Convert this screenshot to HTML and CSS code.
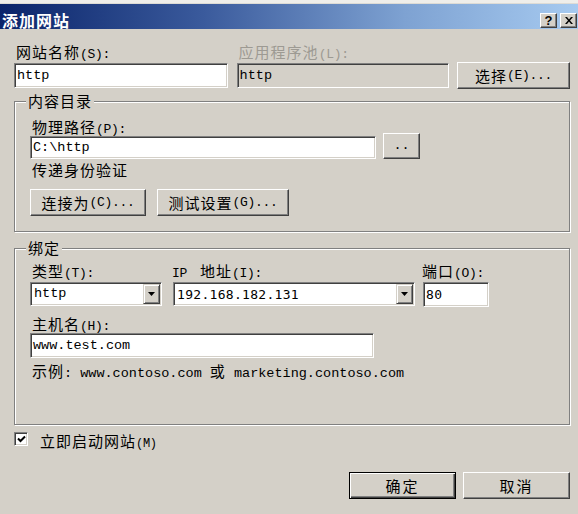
FILE: index.html
```html
<!DOCTYPE html>
<html lang="zh-CN">
<head>
<meta charset="utf-8">
<title>添加网站</title>
<link rel="stylesheet" href="styles.css">
</head>
<body>
<div class="window">
  <div class="topstrip"></div>
  <div class="titlebar">
    <span class="title">添加网站</span>
    <div class="tb-btns">
      <span class="tb-btn help">?</span>
      <span class="tb-btn close"><svg width="8" height="7" viewBox="0 0 8 7"><path d="M0 0h2l2 2.5L6 0h2L5 3.5 8 7H6L4 4.5 2 7H0l3-3.5z" fill="#000"/></svg></span>
    </div>
  </div>
  <div class="content">
    <div class="row1">
      <div class="field site">
        <span class="lbl">网站名称<span class="lat">(S):</span></span>
        <div class="input"><span class="mono">http</span></div>
      </div>
      <div class="field pool">
        <span class="lbl disabled">应用程序池<span class="lat">(L):</span></span>
        <div class="input dis"><span class="mono">http</span></div>
      </div>
      <div class="btn btn-select">选择<span class="lat">(E)...</span></div>
    </div>

    <fieldset class="group g1">
      <legend>内容目录</legend>
      <div class="gbody g1body">
        <span class="lbl">物理路径<span class="lat">(P):</span></span>
        <div class="path-row">
          <div class="input path"><span class="mono">C:\http</span></div>
          <div class="btn btn-dots"><span class="mono">..</span></div>
        </div>
        <span class="lbl auth">传递身份验证</span>
        <div class="btn-row">
          <div class="btn btn-conn">连接为<span class="lat">(C)...</span></div>
          <div class="btn btn-test">测试设置<span class="lat">(G)...</span></div>
        </div>
      </div>
    </fieldset>

    <fieldset class="group g2">
      <legend>绑定</legend>
      <div class="gbody g2body">
        <div class="bind-row">
          <div class="field col-type">
            <span class="lbl">类型<span class="lat">(T):</span></span>
            <div class="combo type"><span class="mono ctext">http</span><span class="arrow"><svg width="7" height="4" viewBox="0 0 7 4"><path d="M0 0h7L3.5 4z" fill="#000"/></svg></span></div>
          </div>
          <div class="field col-ip">
            <span class="lbl nopad"><span class="lat ip-lat">IP</span>地址<span class="lat">(I):</span></span>
            <div class="combo ip"><span class="sans-mono ctext">192.168.182.131</span><span class="arrow"><svg width="7" height="4" viewBox="0 0 7 4"><path d="M0 0h7L3.5 4z" fill="#000"/></svg></span></div>
          </div>
          <div class="field col-port">
            <span class="lbl nopad">端口<span class="lat">(O):</span></span>
            <div class="input port"><span class="sans-mono">80</span></div>
          </div>
        </div>
        <span class="lbl host-lbl">主机名<span class="lat">(H):</span></span>
        <div class="input host"><span class="mono">www.test.com</span></div>
        <p class="example">示例<span class="mono">: www.contoso.com </span>或<span class="mono"> marketing.contoso.com</span></p>
      </div>
    </fieldset>

    <div class="check-row">
      <span class="checkbox"><svg width="9" height="8" viewBox="0 0 9 8"><path d="M1 3.5l2.5 2.5L8 1.5" fill="none" stroke="#000" stroke-width="2"/></svg></span>
      <span class="check-lbl">立即启动网站<span class="lat small">(M)</span></span>
    </div>

    <div class="footer">
      <div class="btn btn-ok default">确定</div>
      <div class="btn btn-cancel">取消</div>
    </div>
  </div>
</div>
</body>
</html>
```

FILE: styles.css
```css
html, body {
  margin: 0;
  padding: 0;
}

body {
  width: 578px;
  height: 514px;
  overflow: hidden;
  background: #d4d0c8;
  color: #000;
  font-family: "Noto Sans CJK SC", "Noto Sans", sans-serif;
  font-size: 15px;
  letter-spacing: 1px;
}

.window {
  width: 578px;
  height: 514px;
  background: #d4d0c8;
}

.topstrip {
  height: 3px;
  background: #efeeea;
  border-bottom: 1px solid #dddbd5;
}

.titlebar {
  height: 25px;
  box-sizing: border-box;
  padding: 7px 1px 0 2px;
  display: flex;
  justify-content: space-between;
  align-items: flex-start;
  background: linear-gradient(to right, #0a246a 0%, #3a5a9c 35%, #7ea2d2 70%, #a6caf0 100%);
}

.title {
  color: #fff;
  font-weight: bold;
  font-size: 16px;
  line-height: 18px;
  height: 18px;
  letter-spacing: 1px;
}

.tb-btns {
  display: flex;
  gap: 3px;
  margin-top: 2px;
}

.tb-btn {
  width: 17px;
  height: 15px;
  box-sizing: border-box;
  background: #d4d0c8;
  border: 1px solid;
  border-color: #fff #404040 #404040 #fff;
  box-shadow: inset -1px -1px #808080;
  display: flex;
  align-items: center;
  justify-content: center;
}

.help {
  font-family: "Liberation Sans", sans-serif;
  font-weight: bold;
  font-size: 13px;
  line-height: 12px;
  letter-spacing: 0;
}

.content {
  padding: 14px 8px 0 14px;
}

.lbl {
  display: block;
  height: 18px;
  line-height: 18px;
  padding-left: 2px;
  white-space: nowrap;
}

.lbl.nopad {
  padding-left: 0;
}

.lat {
  font-family: "Liberation Mono", monospace;
  font-size: 13px;
  line-height: 1;
  letter-spacing: -0.3px;
}

.lat.ip-lat {
  margin-right: 13px;
}

.lat.small {
  font-size: 12px;
}

.disabled {
  color: #9d9a93;
}

.mono {
  font-family: "Liberation Mono", monospace;
  font-size: 13.5px;
  line-height: 1;
  letter-spacing: 0;
}

.sans-mono {
  font-family: "DejaVu Sans Mono", monospace;
  font-size: 13px;
  line-height: 1;
  letter-spacing: 0.3px;
}

.input {
  box-sizing: border-box;
  background: #fff;
  border: 1px solid;
  border-color: #808080 #fff #fff #808080;
  box-shadow: inset 1px 1px #404040, inset -1px -1px #d4d0c8;
  display: flex;
  align-items: center;
  padding-left: 2px;
  white-space: nowrap;
  overflow: hidden;
}

.input.dis {
  background: #d4d0c8;
}

.btn {
  box-sizing: border-box;
  background: #d4d0c8;
  border: 1px solid;
  border-color: #fff #404040 #404040 #fff;
  box-shadow: inset -1px -1px #808080;
  display: flex;
  align-items: center;
  justify-content: center;
  line-height: 18px;
  white-space: nowrap;
}

.btn.default {
  border: 1px solid #000;
  box-shadow: inset 1px 1px #fff, inset -1px -1px #404040, inset -2px -2px #808080;
}

/* Row 1 */
.row1 {
  display: flex;
  align-items: flex-end;
}

.field {
  display: flex;
  flex-direction: column;
  gap: 2px;
}

.site {
  width: 214px;
}

.pool {
  width: 213px;
  margin-left: 9px;
}

.site .input,
.pool .input {
  height: 25px;
}

.btn-select {
  width: 113px;
  height: 27px;
  margin-left: 8px;
  margin-bottom: -1px;
}

/* Group boxes */
.group {
  margin: 0;
  padding: 0;
  min-width: 0;
  border: 1px solid #808080;
  box-shadow: inset 1px 1px #fff, 1px 1px #fff;
}

.group legend {
  margin-left: 11px;
  padding: 0 2px;
  height: 16px;
  line-height: 16px;
  background: #d4d0c8;
}

.g1 {
  margin-top: 5px;
}

.g2 {
  margin-top: 8px;
}

.gbody {
  padding-left: 15px;
}

.g1body {
  padding-top: 9px;
  padding-bottom: 15px;
}

.path-row {
  display: flex;
  align-items: flex-start;
  gap: 7px;
}

.path {
  width: 346px;
  height: 23px;
}

.btn-dots {
  width: 37px;
  height: 26px;
  margin-top: -3px;
}

.auth {
  margin-top: 2px;
}

.btn-row {
  display: flex;
  gap: 11px;
  margin-top: 10px;
}

.btn-conn {
  width: 116px;
  height: 27px;
}

.btn-test {
  width: 132px;
  height: 27px;
}

/* Binding */
.g2body {
  padding-top: 6px;
  padding-bottom: 44px;
}

.bind-row {
  display: flex;
  align-items: flex-start;
}

.col-type {
  width: 132px;
}

.col-ip {
  width: 243px;
  margin-left: 10px;
}

.col-port {
  margin-left: 7px;
}

.combo {
  box-sizing: border-box;
  height: 24px;
  background: #fff;
  border: 1px solid;
  border-color: #808080 #fff #fff #808080;
  box-shadow: inset 1px 1px #404040, inset -1px -1px #d4d0c8;
  padding: 1px;
  display: flex;
  align-items: stretch;
}

.combo.type {
  width: 132px;
}

.combo.ip {
  width: 242px;
  margin-left: 1px;
}

.ctext {
  flex: 1;
  display: flex;
  align-items: center;
  padding-left: 2px;
  white-space: nowrap;
}

.arrow {
  width: 17px;
  box-sizing: border-box;
  background: #d4d0c8;
  border: 1px solid;
  border-color: #d4d0c8 #404040 #404040 #d4d0c8;
  box-shadow: inset 1px 1px #fff, inset -1px -1px #808080;
  display: flex;
  align-items: center;
  justify-content: center;
}

.input.port {
  width: 66px;
  height: 25px;
  margin-left: 1px;
}

.host-lbl {
  margin-top: 8px;
}

.input.host {
  width: 344px;
  height: 25px;
}

.example {
  margin: 4px 0 0;
  padding-left: 2px;
  height: 18px;
  line-height: 18px;
  white-space: nowrap;
}

/* Checkbox */
.check-row {
  display: flex;
  align-items: flex-start;
  margin-top: 7px;
}

.checkbox {
  width: 14px;
  height: 14px;
  box-sizing: border-box;
  background: #fff;
  border: 1px solid;
  border-color: #808080 #fff #fff #808080;
  box-shadow: inset 1px 1px #404040, inset -1px -1px #d4d0c8;
  display: flex;
  align-items: center;
  justify-content: center;
}

.check-lbl {
  margin-left: 12px;
  height: 18px;
  line-height: 18px;
}

/* Footer */
.footer {
  display: flex;
  justify-content: flex-end;
  gap: 7px;
  margin-top: 22px;
}

.btn-ok,
.btn-cancel {
  width: 107px;
  height: 27px;
  letter-spacing: 2px;
}
```
